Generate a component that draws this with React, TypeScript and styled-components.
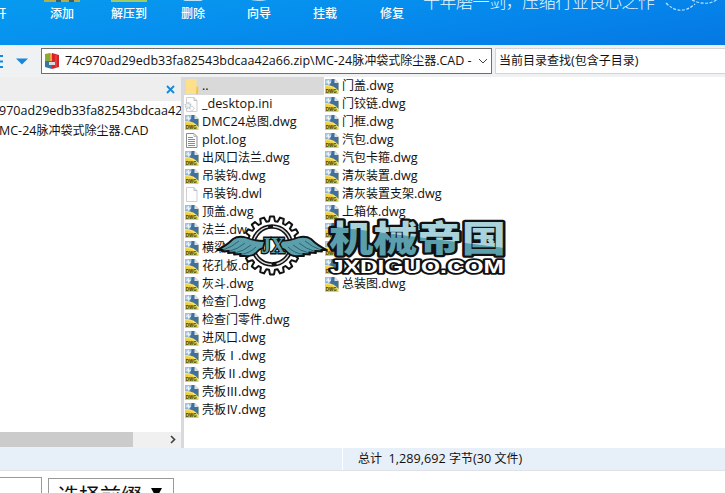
import React from 'react';
import styled, { createGlobalStyle } from 'styled-components';

const Global = createGlobalStyle`
  * { box-sizing: border-box; }
  body { margin: 0; background: #fff; overflow: hidden; }
`;

const Window = styled.div`
  position: relative;
  width: 725px;
  height: 493px;
  overflow: hidden;
  display: flex;
  flex-direction: column;
  background: #fff;
  color: #111;
  font: 12px/18px "Open Sans", "Noto Sans CJK SC", sans-serif;
  white-space: nowrap;
`;

const Latin = styled.span<{ $size?: number }>`
  font-size: ${p => p.$size ?? 12.65}px;
  line-height: 0;
`;

function Mixed({ text, size }: { text: string; size?: number }) {
  return (
    <>
      {text.split(/([\x20-\x7e]+)/).filter(Boolean).map((run, i) =>
        /^[\x20-\x7e]/.test(run) ? <Latin key={i} $size={size}>{run}</Latin> : run)}
    </>
  );
}

/* Toolbar */
const Toolbar = styled.header`
  position: relative;
  height: 45px;
  flex: none;
  background: linear-gradient(172deg, #079af0 0%, #0690ee 35%, #0583ea 70%, #0578e2 100%);
  color: #fff;
`;
const ToolRow = styled.div`
  display: grid;
  grid-template-columns: 29px 66px 68px 60px 72px 60px 74px;
  text-align: center;
`;
const Tool = styled.div<{ $shift?: number }>`
  display: flex;
  flex-direction: column;
  align-items: center;
  height: 30px;
  font-weight: 500;
  margin-left: ${p => p.$shift ?? 0}px;
`;
const ToolArt = styled.svg`
  display: block;
  width: 36px;
  height: 5px;
  flex: none;
`;
const Slogan = styled.svg`
  position: absolute;
  left: 420px;
  top: 0;
`;

/* Address bar */
const AddressBar = styled.div`
  height: 32px;
  flex: none;
  display: flex;
  align-items: flex-start;
  padding-top: 2px;
  background: #f0f1f2;
  border-top: 1px solid #d9eefa;
`;
const NavIcons = styled.svg`
  width: 41px;
  height: 26px;
  flex: none;
`;
const PathBox = styled.div`
  width: 451px;
  height: 26px;
  display: flex;
  align-items: center;
  background: #fff;
  border: 1px solid #6e6e6e;
  padding-left: 3px;
`;
const PathText = styled.span`
  width: 413px;
  margin-left: 5px;
  overflow: hidden;
`;
const SearchBox = styled.div`
  flex: 1;
  height: 26px;
  margin-left: 3px;
  padding: 3px;
  background: #fff;
  border: 1px solid #d5d5d5;
  border-right: 0;
`;

/* Content */
const Content = styled.main`
  height: 371px;
  flex: none;
  display: flex;
`;
const TreePane = styled.aside`
  width: 181px;
  display: flex;
  flex-direction: column;
  overflow: hidden;
`;
const TreeHead = styled.div`
  height: 24px;
  flex: none;
  background: #eee;
  display: flex;
  justify-content: flex-end;
  padding: 8px 6px 0 0;
`;
const Tree = styled.div`
  flex: 1;
  line-height: 20px;
`;
const TreeItem = styled.div<{ $shift?: number }>`
  height: 20px;
  margin-left: ${p => p.$shift ?? 0}px;
`;
const ScrollBar = styled.div`
  height: 16px;
  flex: none;
  display: flex;
  justify-content: space-between;
  background: #f0f0f0;
`;
const Thumb = styled.div`
  width: 133px;
  height: 15px;
  background: #cbcbcb;
`;
const Splitter = styled.div`
  width: 3px;
  background: #d8d9dc;
`;
const Files = styled.section`
  flex: 1;
  display: flex;
  align-items: flex-start;
`;
const Column = styled.div`
  width: 140px;
  flex: none;
`;
const FileRow = styled.div<{ $selected?: boolean }>`
  height: 18px;
  display: flex;
  align-items: center;
  gap: 3px;
  background: ${p => (p.$selected ? '#d9d9d9' : 'transparent')};
`;
const Glyph = styled.svg`
  width: 15px;
  height: 17px;
  flex: none;
`;

type Kind = 'dwg' | 'folder' | 'ini' | 'log' | 'blank';

function FileIcon({ kind }: { kind: Kind }) {
  if (kind === 'dwg')
    return (
      <Glyph viewBox="0 0 15 17">
        <path d="M1 1h9.5L14.5 5v11H1z" fill="#efcf3a" />
        <path d="M1 1h9.5L14.5 5v8C12 9.5 8 7 1 6.8z" fill="#41709f" />
        <path d="M1 1h6.5Q8 4 5.5 7 3 6.6 1 6.8z" fill="#9fc1dc" />
        <path d="M2 4.2h5M4.4 2v4.6M2.8 2.6l3.4 3.2" stroke="#f0f8fc" strokeWidth=".9" />
        <path d="M1 7.6c6 .2 10 2.4 13.3 6" stroke="#f8ea8b" strokeWidth="1" fill="none" />
        <path d="M10.5 1v4h4z" fill="#dce4ea" />
        <text x="1.8" y="15" fontFamily="Liberation Sans" fontWeight="bold" fontSize="5" textLength="10.8" lengthAdjust="spacingAndGlyphs" fill="#3a3410">DWG</text>
      </Glyph>
    );
  if (kind === 'folder')
    return (
      <Glyph viewBox="0 0 15 17">
        <path d="M2 1h10.5v7.5h1.7V16H2z" fill="#ffe08a" />
        <path d="M12.5 8.5h1.7V16h-2.4z" fill="#efc455" />
      </Glyph>
    );
  return (
    <Glyph viewBox="0 0 15 17">
      <path d="M2.5 1.5h7.5l3 3V15.5H2.5z" fill="#fdfdfd" stroke={kind === 'log' ? '#8c8c8c' : '#cfcfcf'} />
      <path d="M10 1.5v3h3" fill="none" stroke="#bbb" />
      {kind === 'log' && <path d="M4 5.5h5M4 7.5h7M4 9.5h7M4 11.5h7M4 13.5h7" stroke="#8b8b8b" />}
      {kind === 'ini' && (
        <g fill="none" stroke="#b9c2c8">
          <circle cx="4" cy="9.5" r="2.7" fill="#eef1f3" strokeWidth="1.6" strokeDasharray="1.3 .8" />
          <circle cx="8" cy="12.5" r="2" strokeDasharray="1 .7" />
        </g>
      )}
    </Glyph>
  );
}

const firstColumn: [string, Kind][] = [
  ['..', 'folder'], ['_desktop.ini', 'ini'], ['DMC24总图.dwg', 'dwg'], ['plot.log', 'log'],
  ['出风口法兰.dwg', 'dwg'], ['吊装钩.dwg', 'dwg'], ['吊装钩.dwl', 'blank'], ['顶盖.dwg', 'dwg'],
  ['法兰.dw', 'dwg'], ['横梁', 'dwg'], ['花孔板.d', 'dwg'], ['灰斗.dwg', 'dwg'],
  ['检查门.dwg', 'dwg'], ['检查门零件.dwg', 'dwg'], ['进风口.dwg', 'dwg'], ['壳板Ⅰ.dwg', 'dwg'],
  ['壳板Ⅱ.dwg', 'dwg'], ['壳板Ⅲ.dwg', 'dwg'], ['壳板Ⅳ.dwg', 'dwg'],
];
const secondColumn: [string, Kind][] = [
  '门盖.dwg', '门铰链.dwg', '门框.dwg', '汽包.dwg', '汽包卡箍.dwg', '清灰装置.dwg',
  '清灰装置支架.dwg', '上箱体.dwg', '', '', '', '总装图.dwg',
].map(name => [name, 'dwg'] as [string, Kind]);

function FileColumn({ items }: { items: [string, Kind][] }) {
  return (
    <Column>
      {items.map(([name, kind], i) => (
        <FileRow key={i} $selected={name === '..'}>
          <FileIcon kind={kind} />
          <span><Mixed text={name} /></span>
        </FileRow>
      ))}
    </Column>
  );
}

/* Emblem over the file list */
const Emblem = styled.svg`
  position: absolute;
  left: 214px;
  top: 210px;
`;

const gearPath = (() => {
  const teeth = 18;
  const points: string[] = [];
  for (let i = 0; i < teeth; i++) {
    [[-0.34, 24.5], [-0.2, 29], [0.2, 29], [0.34, 24.5]].forEach(([offset, r]) => {
      const a = ((i + offset) * 2 * Math.PI) / teeth;
      points.push(`${(58 + r * Math.sin(a)).toFixed(2)} ${(35.5 - r * Math.cos(a)).toFixed(2)}`);
    });
  }
  return `M${points.join('L')}Z`;
})();

function Wing() {
  return (
    <g>
      <path d="M3 40Q12 36 19 29Q24 25.5 32 27.5Q40 31 51 31L49 38Q45 39 42 43Q38 47 31 46L26 46L27 44L20 44.500L21 42.500L14 43L15 41L8 41.500L9 40Z"
        fill="#5b9fac" stroke="#111" strokeWidth="1.8" strokeLinejoin="round" />
      <path d="M9 40Q18 37 25 31M15 41.500Q24 39 31 33M21 43Q30 41 37 35M27 44.500Q36 43 42 37" stroke="#24535e" strokeWidth=".8" fill="none" />
    </g>
  );
}

function Watermark() {
  return (
    <Emblem width="296" height="70" viewBox="0 0 296 70">
      <defs>
        <linearGradient id="gloss" gradientUnits="userSpaceOnUse" x1="205.5" y1="7" x2="200.5" y2="47">
          <stop offset=".49" stopColor="#a8d3da" />
          <stop offset=".51" stopColor="#5b9fac" />
        </linearGradient>
      </defs>
      <path d={gearPath} fill="#fff" stroke="#111" strokeWidth="2" strokeLinejoin="round" />
      <circle cx="58" cy="35.5" r="19" fill="#fff" stroke="#111" strokeWidth="4.6" />
      <circle cx="58" cy="35.5" r="19" fill="none" stroke="#ddd" strokeWidth="1.4" strokeDasharray="25 5" />
      <Wing />
      <g transform="translate(116 0) scale(-1 1)"><Wing /></g>
      <text x="47" y="43" fontFamily="Liberation Serif" fontWeight="bold" fontSize="23" textLength="24" lengthAdjust="spacingAndGlyphs"
        fill="#5b9fac" stroke="#111" strokeWidth="2.8" paintOrder="stroke">JX</text>
      <text x="115" y="42" fontFamily="Noto Sans CJK SC" fontWeight="900" fontSize="36" textLength="177" lengthAdjust="spacingAndGlyphs"
        fill="url(#gloss)" stroke="#111" strokeWidth="4.500" strokeLinejoin="round" paintOrder="stroke">机械帝国</text>
      <text x="116" y="62.500" fontFamily="Liberation Sans" fontWeight="bold" fontSize="17.500" textLength="174" lengthAdjust="spacingAndGlyphs"
        fill="#fff" stroke="#111" strokeWidth="3.5" strokeLinejoin="round" paintOrder="stroke">JXDIGUO.COM</text>
    </Emblem>
  );
}

/* Footer */
const StatusBar = styled.footer`
  height: 23px;
  flex: none;
  display: flex;
  background: #e7eff9;
  border-bottom: 1px solid #dfe3e8;
`;
const StatusLeft = styled.div`
  width: 343px;
  border-right: 1px solid #fff;
`;
const StatusText = styled.div`
  padding: 2px 0 0 15px;
  white-space: pre;
`;
const Below = styled.div`
  flex: 1;
  display: flex;
  align-items: flex-start;
  gap: 6px;
  padding-top: 7px;
`;
const BlankField = styled.div`
  width: 42px;
  height: 30px;
  margin-top: -1px;
  border: 1px solid #999;
  border-left: 0;
`;
const PrefixSelect = styled.div`
  width: 126px;
  height: 30px;
  display: flex;
  justify-content: space-between;
  border: 1px solid #999;
  padding: 2px 11px 0 9px;
  font-size: 21px;
  line-height: 28px;
`;

export default function App() {
  return (
    <Window>
      <Global />
      <Toolbar>
        <ToolRow>
          <Tool $shift={-28}><ToolArt />开</Tool>
          <Tool><ToolArt viewBox="0 0 36 5"><path d="M0 0h36v2H0z" fill="#b5ad48" /><path d="M12 0h5v2h-5M25 0h5v2h-5" fill="#385f6b" /></ToolArt>添加</Tool>
          <Tool><ToolArt viewBox="0 0 36 5"><path d="M0 0h36v2H0z" fill="#a2ca62" /></ToolArt>解压到</Tool>
          <Tool><ToolArt viewBox="0 0 36 5"><path d="M8 0h20l-2 1H10z" fill="#b8e3fb" /></ToolArt>删除</Tool>
          <Tool><ToolArt viewBox="0 0 36 5"><path d="M10 0h16q-8 2-16 0" fill="#b8e3fb" /></ToolArt>向导</Tool>
          <Tool><ToolArt />挂载</Tool>
          <Tool><ToolArt />修复</Tool>
        </ToolRow>
        <Slogan width="305" height="24" viewBox="0 0 305 24">
          <text x="3" y="8" fontFamily="Noto Sans CJK SC" fontWeight="300" fontSize="17" textLength="232" lengthAdjust="spacing" fill="#e9f8ff">十年磨一剑，压缩行业良心之作</text>
          <path d="M246 3q14 14 29 1M272 0q15 7 26-1" fill="none" stroke="#b3e4ff" strokeWidth="1.2" strokeDasharray="3 1.5" />
        </Slogan>
      </Toolbar>
      <AddressBar>
        <NavIcons viewBox="0 0 41 26">
          <path d="M0 8h3M0 13.5h3M0 19h3" stroke="#1687d9" strokeWidth="2" />
          <path d="M16 10.500h12l-6 6z" fill="#1687d9" />
        </NavIcons>
        <PathBox>
          <svg width="15" height="17" viewBox="0 0 15 17">
            <path d="M0 1l5-1v8H0z" fill="#8ba934" /><path d="M5 0l3 1v8H5z" fill="#e8a838" />
            <path d="M7 0l7 2v12l-7 2z" fill="#d6242b" /><path d="M0 8h7v8l-7-2z" fill="#327aa5" />
            <path d="M4 9h6v3H4z" fill="#d9dde0" /><path d="M11 2v12" stroke="#f0574e" />
          </svg>
          <PathText><Mixed size={12.53} text={'74c970ad29edb33fa82543bdcaa42a66.zip\\MC-24脉冲袋式除尘器.CAD -'} /></PathText>
          <svg width="10" height="8" viewBox="0 0 10 8"><path d="M1 2l4 4 4-4" fill="none" stroke="#444" /></svg>
        </PathBox>
        <SearchBox><Mixed text="当前目录查找(包含子目录)" /></SearchBox>
      </AddressBar>
      <Content>
        <TreePane>
          <TreeHead>
            <svg width="9" height="9" viewBox="0 0 9 9"><path d="M1 1l7 7M8 1L1 8" stroke="#1687d9" strokeWidth="1.8" /></svg>
          </TreeHead>
          <Tree>
            <TreeItem $shift={-1}><Mixed size={12.5} text="970ad29edb33fa82543bdcaa42" /></TreeItem>
            <TreeItem $shift={-1}><Mixed size={12.5} text="MC-24脉冲袋式除尘器.CAD" /></TreeItem>
          </Tree>
          <ScrollBar>
            <Thumb />
            <svg width="14" height="15" viewBox="0 0 14 15"><path d="M4 4l3.5 3.5L4 11" fill="none" stroke="#444" strokeWidth="1.7" /></svg>
          </ScrollBar>
        </TreePane>
        <Splitter />
        <Files>
          <FileColumn items={firstColumn} />
          <FileColumn items={secondColumn} />
        </Files>
      </Content>
      <StatusBar>
        <StatusLeft />
        <StatusText><Mixed text="总计  1,289,692 字节(30 文件)" /></StatusText>
      </StatusBar>
      <Below>
        <BlankField />
        <PrefixSelect>
          <span>选择前缀</span>
          <svg width="11" height="18" viewBox="0 0 11 18"><path d="M0 7h11L5.500 17z" fill="#000" /></svg>
        </PrefixSelect>
      </Below>
      <Watermark />
    </Window>
  );
}
